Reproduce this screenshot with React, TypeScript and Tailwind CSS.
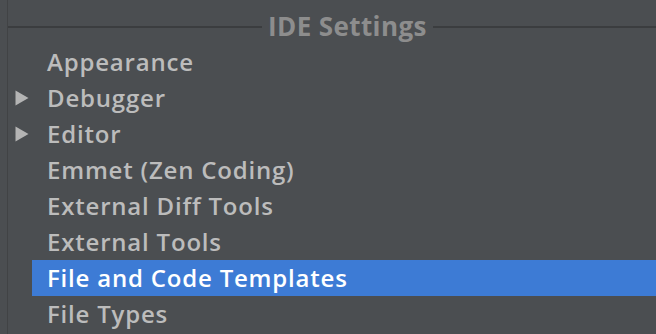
import React from "react";

type Item = { label: string; expandable?: boolean; selected?: boolean };

const items: Item[] = [
  { label: "Appearance" },
  { label: "Debugger", expandable: true },
  { label: "Editor", expandable: true },
  { label: "Emmet (Zen Coding)" },
  { label: "External Diff Tools" },
  { label: "External Tools" },
  { label: "File and Code Templates", selected: true },
  { label: "File Types" },
];

function Arrow() {
  return (
    <svg width="14" height="16" viewBox="0 0 14 16" className="shrink-0">
      <path d="M0.5 0.5 L13.5 8 L0.5 15.5 Z" fill="#b4b4b4" />
    </svg>
  );
}

export default function App() {
  return (
    <div
      className="w-[656px] h-[334px] overflow-hidden bg-[#4b4e51] flex"
      style={{ fontFamily: '"Open Sans", "DejaVu Sans", sans-serif' }}
    >
      <div className="w-[7px] shrink-0" />
      <div className="w-px shrink-0 bg-[#414345]" />
      <div className="flex-1 flex flex-col">
        {/* section header */}
        <div className="h-[44px] flex items-start pt-[10px]">
          <div className="w-[254px] shrink-0 h-[2px] mt-[16px] bg-[#3b3d3f]" />
          <span className="px-[6px] text-[26px] leading-[32px] font-bold text-[#8d8d8d] tracking-[0.4px]">
            IDE Settings
          </span>
          <div className="flex-1 h-[2px] mt-[16px] bg-[#3b3d3f]" />
        </div>

        {items.map((it) => (
          <div
            key={it.label}
            className={
              it.selected
                ? "h-[36px] flex items-center ml-[24px] pl-[15px] bg-[#3d7bd5] text-white"
                : "h-[36px] flex items-center pl-[39px] text-[#bcbcbc]"
            }
          >
            {it.expandable && (
              <span className="-ml-[32px] mr-[18px] flex items-center">
                <Arrow />
              </span>
            )}
            <span className="text-[24px] leading-none font-semibold tracking-[0.8px]">{it.label}</span>
          </div>
        ))}
      </div>
    </div>
  );
}
